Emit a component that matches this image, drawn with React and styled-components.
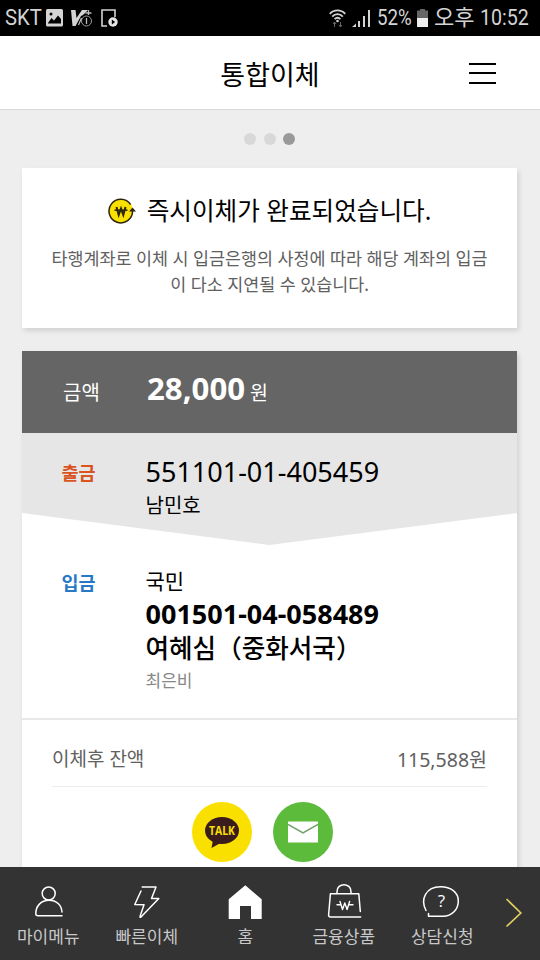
import React from 'react'
import styled, { createGlobalStyle } from 'styled-components'

const COLOR = {
  PAGE: '#eeeeee',
  WHITE: '#ffffff',
  BLACK: '#000000',
  STATUS: '#d4d4d4',
  DARK: '#656565',
  LIGHT: '#e6e6e6',
  NAV: '#333333',
  GRAY_TEXT: '#606060',
  ORANGE: '#d9541e',
  BLUE: '#2878c8',
  YELLOW: '#f9e000',
  GREEN: '#5dbb3c',
}

const GlobalStyle = createGlobalStyle`
  * {
    box-sizing: border-box;
  }

  body {
    margin: 0;
    background: ${COLOR.PAGE};
    font-family: 'Noto Sans', 'Noto Sans CJK KR', sans-serif;
    overflow: hidden;
  }

  svg {
    display: block;
    flex: none;
  }
`

const NAV_ITEMS = [
  { label: '마이메뉴', Icon: PersonIcon },
  { label: '빠른이체', Icon: BoltIcon },
  { label: '홈', Icon: HomeIcon },
  { label: '금융상품', Icon: BagIcon },
  { label: '상담신청', Icon: AskIcon },
]

const App = () => (
  <Screen>
    <GlobalStyle />
    <StatusBar>
      <StatusGroup>
        <StatusText $width={37} $scale={0.92}>SKT</StatusText>
        <ImageIcon />
        <VaccineIcon />
        <DeviceIcon />
      </StatusGroup>
      <StatusGroup>
        <WifiIcon />
        <SignalIcon />
        <StatusText $width={36} $left={6} $scale={0.85}>52%</StatusText>
        <BatteryIcon />
        <StatusText $width={41} $scale={1}>오후</StatusText>
        <StatusText $width={49} $left={5} $scale={0.89}>10:52</StatusText>
      </StatusGroup>
    </StatusBar>
    <Header>
      <Title>통합이체</Title>
      <MenuButton aria-label='메뉴'>
        <MenuIcon />
      </MenuButton>
    </Header>
    <Content>
      <Steps>
        <Step />
        <Step />
        <Step $active />
      </Steps>
      <Notice>
        <NoticeTitle>
          <WonIcon />
          즉시이체가 완료되었습니다.
        </NoticeTitle>
        <NoticeText>
          타행계좌로 이체 시 입금은행의 사정에 따라 해당 계좌의 입금
          <br />이 다소 지연될 수 있습니다.
        </NoticeText>
      </Notice>
      <Receipt>
        <AmountRow>
          <AmountLabel>금액</AmountLabel>
          <Amount>28,000</Amount>
          <Unit>원</Unit>
        </AmountRow>
        <Withdraw>
          <Label $color={COLOR.ORANGE}>출금</Label>
          <div>
            <Account>551101-01-405459</Account>
            <Owner>남민호</Owner>
          </div>
        </Withdraw>
        <Deposit>
          <Label $color={COLOR.BLUE}>입금</Label>
          <div>
            <Bank>국민</Bank>
            <Account $bold>001501-04-058489</Account>
            <Payee>여혜심（중화서국）</Payee>
            <Memo>최은비</Memo>
          </div>
        </Deposit>
        <Balance>
          <span>이체후 잔액</span>
          <BalanceValue>115,588원</BalanceValue>
        </Balance>
        <Shares>
          <ShareButton $color={COLOR.YELLOW} aria-label='TALK'>
            <TalkIcon />
          </ShareButton>
          <ShareButton $color={COLOR.GREEN} aria-label='메일'>
            <MailIcon />
          </ShareButton>
        </Shares>
      </Receipt>
    </Content>
    <Nav>
      {NAV_ITEMS.map(({ label, Icon }) => (
        <NavItem key={label}>
          <Icon />
          {label}
        </NavItem>
      ))}
      <NextButton aria-label='다음'>
        <ChevronIcon />
      </NextButton>
    </Nav>
  </Screen>
)

// status bar icons

const ImageIcon = () => (
  <StatusSvg $left={4} width='17' height='18' viewBox='0 0 17 18'>
    <rect width='17' height='17.5' rx='1.5' fill={COLOR.STATUS} />
    <path d='M2 14 5.5 9l2.5 2.5L12 6.5l3 3.5v4.5H2z' fill='#000' />
    <circle cx='5' cy='5' r='1.5' fill='#000' />
  </StatusSvg>
)

const VaccineIcon = () => (
  <StatusSvg $left={8} width='21' height='18' viewBox='0 0 21 18'>
    <path d='M0 1h4.5l1 8L11 1h6l-5 5-2 1-5.5 10H1.5z' fill={COLOR.STATUS} />
    <circle cx='15.5' cy='12' r='5' fill='#000' stroke='#999' />
    <path d='M15.5 9v6M17.5 1v5M14.5 4h6M10.5 9l-3 7' fill='none' stroke='#bbb' strokeWidth='1.3' />
  </StatusSvg>
)

const DeviceIcon = () => (
  <StatusSvg $left={9} width='17' height='18' viewBox='0 0 17 18'>
    <path d='M6 17H1V1h13v7' fill='none' stroke={COLOR.STATUS} strokeWidth='1.6' />
    <circle cx='12' cy='13' r='4.7' fill='#e6e6e6' />
    <path d='M10.8 10.5v5l3.4-2.5z' fill='#000' />
  </StatusSvg>
)

const WifiIcon = () => (
  <StatusSvg width='17' height='19' viewBox='0 0 17 19'>
    <g fill='none' stroke={COLOR.STATUS} strokeWidth='1.8'>
      <path d='M.8 4.8C5 .2 12 .2 16.2 4.8M3.2 7.6c3-3.2 7.6-3.2 10.6 0M5.6 10.2c1.7-1.7 4.1-1.7 5.8 0' />
    </g>
    <circle cx='8.5' cy='12' r='1.3' fill={COLOR.STATUS} />
    <path d='M5.5 18v-5M4 15l1.5-2L7 15M11.5 13v5M10 16l1.5 2 1.5-2' fill='none' stroke='#666' />
  </StatusSvg>
)

const SignalIcon = () => (
  <StatusSvg $left={6} width='19' height='18' viewBox='0 0 19 18'>
    <path d='M0 18l4-3.5V18zM6 12h2v6H6zM11 7h2v11h-2zM16 1h2v17h-2z' fill={COLOR.STATUS} />
  </StatusSvg>
)

const BatteryIcon = () => (
  <StatusSvg $left={4} $right={6} width='11' height='18' viewBox='0 0 11 18'>
    <path d='M3 0h5v1.5h3V9H0V1.5h3z' fill='#666' />
    <path d='M0 9h11v9H0z' fill='#eee' />
  </StatusSvg>
)

// page icons

const MenuIcon = () => (
  <svg width='27' height='26' viewBox='0 0 27 26'>
    <path d='M0 3h27M0 12h27M0 22h27' stroke='#000' strokeWidth='2' />
  </svg>
)

const WonIcon = () => (
  <svg width='28' height='26' viewBox='0 0 28 26'>
    <circle cx='12.8' cy='13' r='12' fill={COLOR.YELLOW} />
    <path d='M22.6 6.5A11.8 11.8 0 1 0 24.6 13' fill='none' stroke='#2b2510' strokeWidth='1.5' />
    <path d='M21 13.5l3.5-4 3.5 4z' fill='#2b2510' />
    <path d='M8.5 9l2.2 8 2.3-6.5 2.3 6.5 2.2-8' fill='none' stroke='#2b2510' strokeWidth='2' />
    <path d='M6.5 12.2h13' stroke='#2b2510' strokeWidth='1.5' />
  </svg>
)

const TalkIcon = () => (
  <svg width='36' height='34' viewBox='0 0 36 34'>
    <ellipse cx='18' cy='15.5' rx='17' ry='13.5' fill='#3b1c1c' />
    <path d='M9 25 7.500 33l9-5z' fill='#3b1c1c' />
    <IconText x='18' y='19.5' $size={11.5} $weight={700} textLength='26' lengthAdjust='spacingAndGlyphs' fill={COLOR.YELLOW}>TALK</IconText>
  </svg>
)

const MailIcon = () => (
  <svg width='30' height='22' viewBox='0 0 30 22'>
    <path d='M0 .5h30v21H0z' fill='#fff' />
    <path d='M0 3.5l15 8.5 15-8.5' fill='none' stroke='#6fa068' strokeWidth='1.5' />
  </svg>
)

const ChevronIcon = () => (
  <svg width='18' height='30' viewBox='0 0 18 30'>
    <path d='M1.5 1 15.8 15l-14.3 13.5' fill='none' stroke='#e0d060' strokeWidth='1.7' />
  </svg>
)

function PersonIcon() {
  return (
    <LineSvg viewBox='0 0 40 40'>
      <circle cx='20.7' cy='13.5' r='6.5' />
      <path d='M34 35.7H10c-1.5 0-2.2-.7-2.2-2C7.800 26 13 20.3 21 20.3c7.5 0 12.5 4.7 13 11.700' />
    </LineSvg>
  )
}

function BoltIcon() {
  return (
    <LineSvg viewBox='0 0 40 40'>
      <path d='M15.2 7h13.8l-4.5 11.5h7.3L14 37c-.6.6-1.3.3-1-.5L17 24.8 7.8 24.5 14 11' />
    </LineSvg>
  )
}

function HomeIcon() {
  return (
    <LineSvg viewBox='0 0 40 40'>
      <path d='M3.7 19.3 20.3 5.3l16.4 14V39H26V26H15v13H3.7z' fill='#fff' stroke='none' />
    </LineSvg>
  )
}

function BagIcon() {
  return (
    <LineSvg viewBox='0 0 40 40'>
      <path d='M36.3 31.5 34.8 13.7H6.4L4.6 35c0 1.4.6 2 2 2h30' />
      <path d='M13 13.5v-2c0-9 14-9 14 0v2' />
      <path d='M16 21.5l2.5 8 2.3-6.5 2.3 6.5 2.5-8M13 24.8h4M25 24.8h4' strokeWidth='1.4' />
    </LineSvg>
  )
}

function AskIcon() {
  return (
    <LineSvg viewBox='0 0 40 40'>
      <path d='M4 30.5C-2 19 4 6.8 18.5 6.8 29 6.8 36.3 12.5 36.3 21S30 36.3 21 36.3H6.5V33.500' />
      <IconText x='19.5' y='27' $size={17} $weight={400} fill='#fff' stroke='none'>?</IconText>
    </LineSvg>
  )
}

const Screen = styled.div`
  display: flex;
  flex-direction: column;
  width: 540px;
  height: 960px;
  overflow: hidden;
`

const StatusBar = styled.div`
  display: flex;
  flex: none;
  justify-content: space-between;
  height: 36px;
  padding: 0 11px 0 5px;
  background: ${COLOR.BLACK};
`

const StatusGroup = styled.div`
  display: flex;
  align-items: center;
`

const StatusText = styled.span`
  width: ${({ $width }) => $width}px;
  margin-left: ${({ $left = 0 }) => $left}px;
  color: ${COLOR.STATUS};
  font-family: Roboto, 'Noto Sans CJK KR', sans-serif;
  font-size: 22px;
  line-height: 36px;
  white-space: nowrap;
  transform: scaleX(${({ $scale }) => $scale});
  transform-origin: left;
`

const StatusSvg = styled.svg`
  margin-left: ${({ $left = 0 }) => $left}px;
  margin-right: ${({ $right = 0 }) => $right}px;
`

const Header = styled.header`
  display: grid;
  grid-template-columns: 1fr auto 1fr;
  flex: none;
  align-items: center;
  height: 74px;
  padding: 2px 44px 0;
  border-bottom: 1px solid #d8d8d8;
  background: ${COLOR.WHITE};
`

const Title = styled.h1`
  grid-column: 2;
  margin: 0;
  padding-top: 2px;
  font-size: 27px;
  font-weight: 400;
  line-height: 40px;
`

const MenuButton = styled.button`
  justify-self: end;
  padding: 0;
  border: 0;
  background: none;
`

const Content = styled.main`
  flex: 1;
  min-height: 0;
  padding: 0 23px 0 22px;
  overflow: hidden;
`

const Steps = styled.div`
  display: flex;
  justify-content: center;
  gap: 7.5px;
  height: 58px;
  padding-top: 23px;
`

const Step = styled.span`
  width: 12px;
  height: 12px;
  border-radius: 50%;
  background: ${({ $active }) => ($active ? '#999999' : '#d8d8d8')};
`

const Notice = styled.section`
  height: 160px;
  padding-top: 24px;
  background: ${COLOR.WHITE};
  box-shadow: 2px 3px 5px rgba(0, 0, 0, 0.12);
  text-align: center;
`

const NoticeTitle = styled.h2`
  display: flex;
  align-items: center;
  justify-content: center;
  gap: 11px;
  margin: 0;
  font-size: 24.6px;
  font-weight: 400;
  line-height: 38px;
`

const NoticeText = styled.p`
  margin: 15px 0 0;
  color: ${COLOR.GRAY_TEXT};
  font-size: 17.4px;
  line-height: 26px;
  white-space: nowrap;
`

const Receipt = styled.section`
  height: 560px;
  margin-top: 23px;
  background: ${COLOR.WHITE};
  box-shadow: 2px 3px 5px rgba(0, 0, 0, 0.12);
`

const AmountRow = styled.div`
  display: flex;
  align-items: baseline;
  height: 82px;
  padding: 16px 0 0 41px;
  background: ${COLOR.DARK};
  color: ${COLOR.WHITE};
  line-height: 42px;
`

const AmountLabel = styled.span`
  width: 84px;
  font-size: 20px;
`

const Amount = styled.strong`
  font-size: 31.2px;
`

const Unit = styled.span`
  margin-left: 5px;
  font-size: 19.5px;
`

const Withdraw = styled.div`
  display: flex;
  height: 112px;
  padding: 20px 0 0 39.5px;
  background: ${COLOR.LIGHT};
  clip-path: polygon(0 0, 100% 0, 100% 80px, 50% 112px, 0 80px);
`

const Deposit = styled.div`
  display: flex;
  height: 175px;
  padding: 18px 0 0 39.5px;
  border-bottom: 2px solid #e8e8e8;
`

const Label = styled.span`
  width: 84px;
  color: ${({ $color }) => $color};
  font-size: 18.5px;
  font-weight: 700;
  line-height: 39px;
`

const Account = styled.div`
  font-size: 27px;
  font-weight: ${({ $bold }) => ($bold ? 700 : 400)};
  line-height: 38px;
`

const Owner = styled.div`
  font-size: 20px;
  line-height: 30px;
`

const Bank = styled.div`
  padding-top: 4px;
  font-size: 21px;
  line-height: 28px;
`

const Payee = styled.div`
  font-size: 25.6px;
  font-weight: 500;
  line-height: 31px;
`

const Memo = styled.div`
  color: #888888;
  font-size: 17px;
  line-height: 33px;
`

const Balance = styled.div`
  display: flex;
  justify-content: space-between;
  height: 67px;
  margin: 0 30px;
  border-bottom: 1px solid #ececec;
  color: ${COLOR.GRAY_TEXT};
  font-size: 19px;
  line-height: 79px;
`

const BalanceValue = styled.span`
  font-size: 19.5px;
`

const Shares = styled.div`
  display: flex;
  justify-content: center;
  gap: 21px;
  padding: 15px 14px 0 0;
`

const ShareButton = styled.button`
  display: flex;
  align-items: center;
  justify-content: center;
  width: 60px;
  height: 60px;
  padding: 0;
  border: 0;
  border-radius: 50%;
  background: ${({ $color }) => $color};
`

const IconText = styled.text`
  font-family: 'Open Sans', sans-serif;
  font-size: ${({ $size }) => $size}px;
  font-weight: ${({ $weight }) => $weight};
  text-anchor: middle;
`

const Nav = styled.nav`
  display: flex;
  flex: none;
  height: 93px;
  background: ${COLOR.NAV};
`

const NavItem = styled.div`
  display: flex;
  flex-direction: column;
  align-items: center;
  width: 98.5px;
  margin-left: -1px;
  margin-right: 1px;
  padding-top: 13px;
  color: #c8c8c8;
  font-size: 17px;
  line-height: 33px;
`

const LineSvg = styled.svg`
  width: 40px;
  height: 40px;
  fill: none;
  stroke: ${COLOR.WHITE};
  stroke-width: 1.5;
  stroke-linecap: round;
  stroke-linejoin: round;
`

const NextButton = styled.button`
  flex: 1;
  padding: 0 0 1px 12px;
  border: 0;
  background: none;
`

export default App
